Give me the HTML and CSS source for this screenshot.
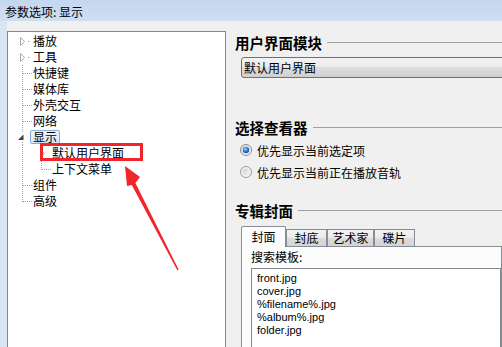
FILE: index.html
```html
<!DOCTYPE html>
<html>
<head>
<meta charset="utf-8">
<link rel="stylesheet" href="styles.css">
</head>
<body>
<div class="window">
  <div class="titlebar">参数选项: 显示</div>
  <div class="frame">
    <div class="tree">
      <div class="row"><svg class="g" width="25" height="16"><polygon points="12.5,4.5 16.5,8.5 12.5,12.5" fill="#fff" stroke="#a6a6a6"/><rect x="20" y="8" width="1" height="1" fill="#909090"/></svg><span>播放</span></div>
      <div class="row"><svg class="g" width="25" height="16"><polygon points="12.5,4.5 16.5,8.5 12.5,12.5" fill="#fff" stroke="#a6a6a6"/><rect x="20" y="8" width="1" height="1" fill="#909090"/></svg><span>工具</span></div>
      <div class="row"><svg class="g" width="25" height="16"><path class="dot" d="M14.5 0V16M15 8.5H24"/></svg><span>快捷键</span></div>
      <div class="row"><svg class="g" width="25" height="16"><path class="dot" d="M14.5 0V16M15 8.5H24"/></svg><span>媒体库</span></div>
      <div class="row"><svg class="g" width="25" height="16"><path class="dot" d="M14.5 0V16M15 8.5H24"/></svg><span>外壳交互</span></div>
      <div class="row"><svg class="g" width="25" height="16"><path class="dot" d="M14.5 0V16M15 8.5H24"/></svg><span>网络</span></div>
      <div class="row"><svg class="g" width="22" height="16"><path class="dot" d="M14.5 0V4M14.5 13V16"/><polygon points="15.5,5.5 15.5,11 10,11" fill="#404040"/></svg><span class="sel">显示</span></div>
      <div class="row"><svg class="g" width="44" height="16"><path class="dot" d="M14.5 0V16M33.5 13V16"/><polygon points="32.5,4.5 36.5,8.5 32.5,12.5" fill="#fff" stroke="#a6a6a6"/></svg><span>默认用户界面</span></div>
      <div class="row"><svg class="g" width="44" height="16"><path class="dot" d="M14.5 0V16M33.5 0V9M34 8.5H43"/></svg><span>上下文菜单</span></div>
      <div class="row"><svg class="g" width="25" height="16"><path class="dot" d="M14.5 0V16M15 8.5H24"/></svg><span>组件</span></div>
      <div class="row"><svg class="g" width="25" height="16"><path class="dot" d="M14.5 0V9M15 8.5H24"/></svg><span>高级</span></div>
    </div>
    <div class="panel">
      <div class="heading"><span>用户界面模块</span><i></i></div>
      <div class="combo">默认用户界面</div>
      <div class="heading h2"><span>选择查看器</span><i></i></div>
      <div class="radio r1"><svg width="12" height="12" viewBox="0 0 12 12"><defs><radialGradient id="on" cx="0.4" cy="0.35" r="0.7"><stop offset="0" stop-color="#9fd6ff"/><stop offset="0.5" stop-color="#2a86d6"/><stop offset="1" stop-color="#0d4f96"/></radialGradient><linearGradient id="bg" x1="0" y1="0" x2="1" y2="1"><stop offset="0" stop-color="#d8d8d8"/><stop offset="1" stop-color="#ffffff"/></linearGradient></defs><circle cx="6" cy="6" r="5.5" fill="url(#bg)" stroke="#8a8a8a"/><circle cx="6" cy="6" r="3.2" fill="url(#on)"/></svg><span>优先显示当前选定项</span></div>
      <div class="radio"><svg width="12" height="12" viewBox="0 0 12 12"><defs><linearGradient id="off" x1="0" y1="0" x2="1" y2="1"><stop offset="0" stop-color="#cfcfcf"/><stop offset="1" stop-color="#f6f6f6"/></linearGradient></defs><circle cx="6" cy="6" r="5.5" fill="#f4f4f4" stroke="#9a9a9a"/><circle cx="6" cy="6" r="3.5" fill="url(#off)"/></svg><span>优先显示当前正在播放音轨</span></div>
      <div class="heading h3"><span>专辑封面</span><i></i></div>
      <div class="tabs">
        <span class="tab active w45">封面</span>
        <span class="tab w41">封底</span>
        <span class="tab w47">艺术家</span>
        <span class="tab w41">碟片</span>
      </div>
      <div class="tabbody">
        <div class="tlabel">搜索模板:</div>
        <div class="textarea">front.jpg<br>cover.jpg<br>%filename%.jpg<br>%album%.jpg<br>folder.jpg</div>
      </div>
    </div>
  </div>
  <svg class="annot" width="502" height="347">
    <rect x="41.5" y="144.5" width="100" height="15" fill="none" stroke="#f0262b" stroke-width="3"/>
    <polygon points="125,166 140,177 135.4,183 178.7,269.7 177.3,270.3 131.8,185 127,186" fill="#f0262b"/>
  </svg>
</div>
</body>
</html>
```
FILE: styles.css
```css
* { box-sizing: border-box; }
html, body { margin: 0; padding: 0; }
body {
  width: 502px;
  height: 347px;
  overflow: hidden;
  background: #f0f0f0;
  color: #000;
  font-family: "Noto Sans CJK SC", "Noto Sans", sans-serif;
  font-size: 12px;
}
.window { position: relative; width: 502px; height: 347px; overflow: hidden; }
.titlebar {
  height: 21px;
  padding-left: 5px;
  line-height: 24px;
  font-size: 12px;
  background: linear-gradient(#c3d7ef, #cfdff3);
}
.frame {
  display: flex;
  height: 326px;
  padding-top: 10px;
  border-left: 7px solid #d9e6f5;
  background: #f0f0f0;
}
.tree {
  flex: none;
  width: 219px;
  height: 330px;
  padding-top: 1px;
  background: #fff;
  border: 1px solid #828790;
}
.row {
  display: flex;
  align-items: center;
  height: 16px;
  line-height: 16px;
  white-space: nowrap;
}
.g { display: block; flex: none; }
.dot { stroke: #a0a0a0; stroke-width: 1; stroke-dasharray: 1 1; fill: none; }
.sel {
  height: 14px;
  line-height: 12px;
  padding: 0 2px;
  border: 1px solid #84acdd;
  border-radius: 2px;
  background: linear-gradient(#edf5fe, #d6e7fb);
}
.panel { flex: 1; min-width: 0; padding-left: 9px; }
.heading {
  display: flex;
  align-items: center;
  height: 20px;
  margin-top: 1px;
  font-size: 14.5px;
  font-weight: 700;
  white-space: nowrap;
}
.heading i { flex: 1; height: 0; margin-left: 5px; border-top: 1px solid #a0a0a0; }
.h2 { margin-top: 39px; }
.h3 { margin-top: 17px; }
.combo {
  width: 280px;
  height: 21px;
  margin: 5px 0 0 6px;
  padding-left: 2px;
  line-height: 19px;
  border: 1px solid #707070;
  border-radius: 3px;
  background: linear-gradient(#f3f3f3 0%, #ebebeb 50%, #dddddd 50%, #d0d0d0 100%);
}
.radio {
  display: flex;
  align-items: center;
  gap: 5px;
  height: 22px;
  margin-left: 5px;
}
.radio svg { display: block; }
.r1 { margin-top: 2px; }
.tabs {
  display: flex;
  align-items: flex-end;
  height: 20px;
  margin: 6px 0 0 6px;
  position: relative;
  z-index: 1;
}
.tab {
  height: 17px;
  line-height: 16px;
  text-align: center;
  border: 1px solid #898c95;
  border-bottom: none;
  background: linear-gradient(#f3f3f3, #e9e9e9 50%, #dcdcdc 50%, #d4d4d4);
}
.tab.active {
  height: 21px;
  margin-bottom: -1px;
  line-height: 19px;
  background: #fcfcfc;
  border-radius: 2px 2px 0 0;
}
.w45 { width: 45px; }
.w41 { width: 41px; }
.w47 { width: 47px; }
.tabbody {
  height: 120px;
  margin-left: 6px;
  padding: 3px 0 0 9px;
  border: 1px solid #898c95;
  background: #fcfcfc;
}
.tlabel { height: 14px; line-height: 14px; }
.textarea {
  height: 100px;
  margin-top: 4px;
  padding: 3px 0 0 5px;
  border: 1px solid #828790;
  background: #fff;
  font-family: "Liberation Sans", Arial, sans-serif;
  font-size: 11px;
  line-height: 13px;
}
.annot { position: absolute; left: 0; top: 0; pointer-events: none; }
```
